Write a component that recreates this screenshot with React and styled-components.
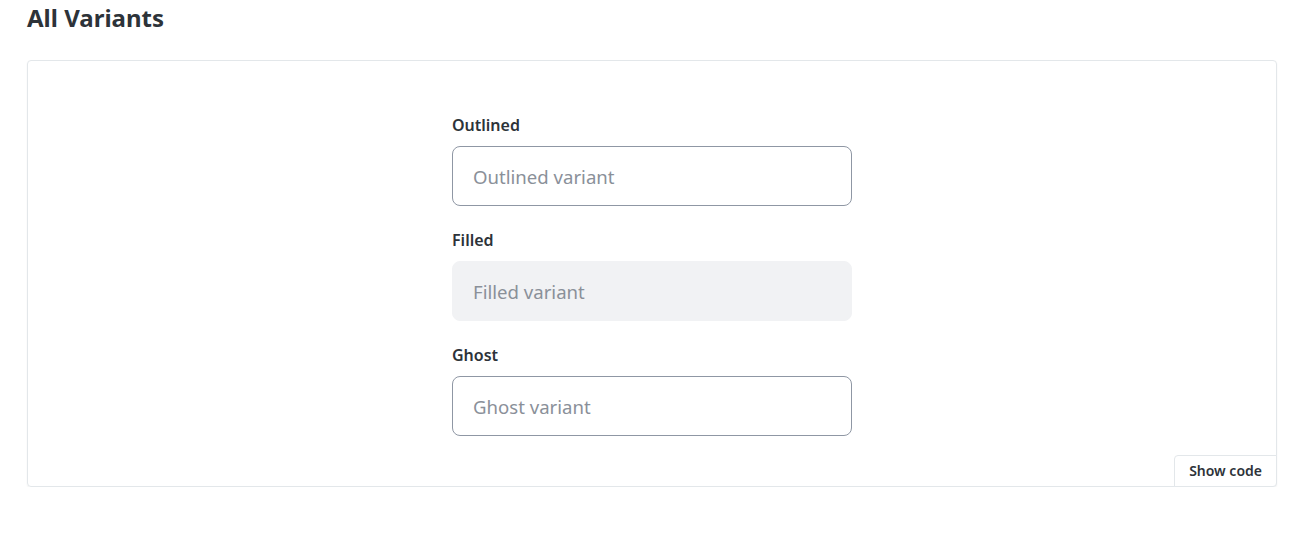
import React from 'react'
import styled, { createGlobalStyle } from 'styled-components'

const GlobalStyle = createGlobalStyle`
body {
  margin: 0;
  background: #fff;
  font-family: "Noto Sans", sans-serif;
  color: #2d3339;
}
`

const Page = styled.div`
padding: 2px 37px 0 27px;
`

const Title = styled.h2`
margin: 0 0 26px;
font-size: 24px;
line-height: 32px;
font-weight: 700;
color: #2d3339;
`

const Card = styled.div`
position: relative;
border: 1px solid #e3e7ea;
border-radius: 4px;
box-shadow: 0 1px 2px rgba(0,0,0,0.06);
padding: 54px 0 50px;
display: flex;
justify-content: center;
`

const Stack = styled.div`
width: 400px;
display: flex;
flex-direction: column;
gap: 24px;
`

const Field = styled.div`
display: flex;
flex-direction: column;
gap: 8px;
`

const Label = styled.label`
font-size: 16px;
line-height: 21px;
margin-bottom: 2px;
font-weight: 600;
color: #2d3339;
`

const Input = styled.input`
box-sizing: border-box;
width: 100%;
height: 60px;
padding: 1px 20px 0;
font-family: "Noto Sans", sans-serif;
font-size: 18.6px;
color: #2d3339;
border-radius: 8px;
outline: none;
border: 1px solid ${p => p.$variant === 'filled' ? '#f1f2f4' : '#8f97a4'};
background-color: ${p => p.$variant === 'filled' ? '#f1f2f4' : '#fff'};
&::placeholder {
  color: #8a9099;
}
`

const ShowCode = styled.button`
position: absolute;
right: -1px;
bottom: -1px;
padding: 0 14px 1px;
height: 32px;
background: #fff;
border: 1px solid #e3e7ea;
border-radius: 4px 0 4px 0;
font-family: "Noto Sans", sans-serif;
font-size: 14px;
font-weight: 600;
color: #2d3339;
cursor: pointer;
`

const variants = [
  { label: 'Outlined', variant: 'outlined' },
  { label: 'Filled', variant: 'filled' },
  { label: 'Ghost', variant: 'ghost' },
]

const App = () => {
  return (
    <Page>
      <GlobalStyle />
      <Title>All Variants</Title>
      <Card>
        <Stack>
          {variants.map(v => (
            <Field key={v.variant}>
              <Label>{v.label}</Label>
              <Input $variant={v.variant} placeholder={`${v.label} variant`} />
            </Field>
          ))}
        </Stack>
        <ShowCode>Show code</ShowCode>
      </Card>
    </Page>
  )
}

export default App
